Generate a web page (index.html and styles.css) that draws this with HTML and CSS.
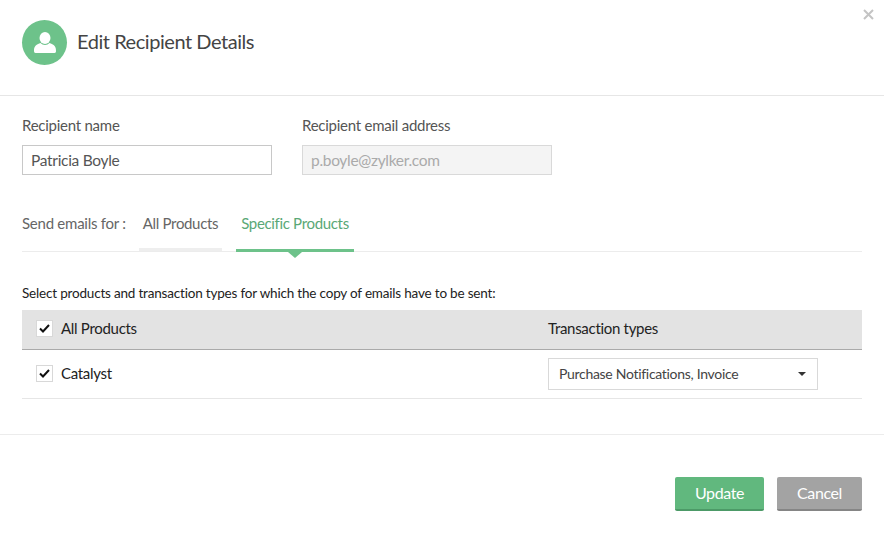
FILE: index.html
```html
<!DOCTYPE html>
<html lang="en">
<head>
    <meta charset="UTF-8">
    <title>Edit Recipient Details</title>
    <link rel="stylesheet" href="styles.css">
</head>
<body>
    <div class="dialog">
        <header class="dialog-header">
            <div class="avatar">
                <svg width="22" height="21" viewBox="0 0 22 21">
                    <ellipse cx="11" cy="6" rx="5.500" ry="6" fill="#fff"/>
                    <path d="M0 19c0-4 1-6 6.500-8 1.200 1.300 2.700 2 4.500 2s3.300-.7 4.500-2c5.500 2 6.500 4 6.500 8 0 1-.5 2-1.500 2h-19C.5 21 0 20 0 19z" fill="#fff"/>
                </svg>
            </div>
            <h1>Edit Recipient Details</h1>
            <button class="close" aria-label="Close">
                <svg width="11" height="11" viewBox="0 0 11 11"><path d="M1 1l9 9M10 1l-9 9" stroke="#c4c4c4" stroke-width="2" fill="none"/></svg>
            </button>
        </header>

        <div class="dialog-body">
            <div class="fields">
                <div class="field">
                    <label for="name">Recipient name</label>
                    <input id="name" type="text" value="Patricia Boyle">
                </div>
                <div class="field">
                    <label for="email">Recipient email address</label>
                    <input id="email" type="text" value="p.boyle@zylker.com" disabled>
                </div>
            </div>

            <div class="tabs">
                <span class="tabs-label">Send emails for :</span>
                <a class="tab">All Products</a>
                <a class="tab active">Specific Products</a>
            </div>

            <p class="hint">Select products and transaction types for which the copy of emails have to be sent:</p>

            <div class="table-head">
                <div class="cell-product">
                    <span class="check"><svg width="11" height="9" viewBox="0 0 11 9"><path d="M1 4.500l3 3 6-6.500" stroke="#111" stroke-width="2" fill="none"/></svg></span>
                    <span>All Products</span>
                </div>
                <div class="cell-type"><span>Transaction types</span></div>
            </div>
            <div class="table-row">
                <div class="cell-product">
                    <span class="check"><svg width="11" height="9" viewBox="0 0 11 9"><path d="M1 4.500l3 3 6-6.500" stroke="#111" stroke-width="2" fill="none"/></svg></span>
                    <span>Catalyst</span>
                </div>
                <div class="cell-type">
                    <div class="select">
                        <span class="select-value">Purchase Notifications, Invoice</span>
                        <i class="caret"></i>
                    </div>
                </div>
            </div>
        </div>

        <footer class="dialog-footer">
            <button class="btn btn-update">Update</button>
            <button class="btn btn-cancel">Cancel</button>
        </footer>
    </div>
</body>
</html>
```

FILE: styles.css
```css
* {
    box-sizing: border-box;
}
body {
    margin: 0;
    font-family: 'Lato', 'Open Sans', sans-serif;
    letter-spacing: -0.3px;
    background: #fff;
    color: #333;
}
.dialog {
    width: 884px;
    height: 533px;
    overflow: hidden;
}
.dialog-header {
    position: relative;
    display: flex;
    align-items: center;
    height: 96px;
    padding: 0 22px 11px;
    border-bottom: 1px solid #e6e6e6;
}
.dialog-header h1 {
    margin: 0 0 2px 10px;
    font-size: 20px;
    font-weight: 400;
    letter-spacing: -0.45px;
    color: #444;
}
.avatar {
    display: flex;
    align-items: center;
    justify-content: center;
    width: 45px;
    height: 45px;
    border-radius: 50%;
    background: #6dc28a;
}
.close {
    position: absolute;
    top: 8px;
    right: 10px;
    padding: 0;
    border: none;
    background: none;
}
.dialog-body {
    padding: 19px 22px 0;
    height: 339px;
    border-bottom: 1px solid #ececec;
}
.fields {
    display: flex;
    gap: 30px;
}
.field {
    width: 250px;
}
.field label {
    display: block;
    margin-bottom: 10px;
    height: 20px;
    line-height: 20px;
    font-size: 15px;
    letter-spacing: -0.25px;
    color: #555;
}
.field input {
    display: block;
    width: 100%;
    height: 30px;
    padding: 0 8px;
    border: 1px solid #c8c8c8;
    font-family: inherit;
    font-size: 15.500px;
    letter-spacing: -0.3px;
    color: #555;
    outline: none;
}
.field input:disabled {
    background: #f4f4f4;
    border-color: #d9d9d9;
    color: #aaa;
}
.tabs {
    display: flex;
    align-items: flex-start;
    height: 48px;
    margin-top: 29px;
    border-bottom: 1px solid #ececec;
}
.tabs-label {
    width: 117px;
    padding-top: 9px;
    line-height: 20px;
    font-size: 15px;
    letter-spacing: -0.25px;
    color: #666;
}
.tab {
    position: relative;
    height: 46px;
    margin-top: 1px;
    padding-top: 8px;
    line-height: 20px;
    font-size: 15px;
    letter-spacing: -0.33px;
    text-align: center;
    color: #666;
    border-bottom: 3px solid #eee;
}
.tab:nth-of-type(1) {
    width: 83px;
}
.tab.active {
    width: 118px;
    margin-left: 14px;
    color: #5aa876;
    height: 47px;
    border-bottom-color: #6dc28a;
}
.tab.active::after {
    content: "";
    position: absolute;
    left: 52px;
    bottom: -9px;
    border-left: 7px solid transparent;
    border-right: 7px solid transparent;
    border-top: 6px solid #6dc28a;
}
.hint {
    margin: 31px 0 7px;
    height: 20px;
    line-height: 20px;
    font-size: 13.500px;
    letter-spacing: -0.19px;
    color: #222;
}
.table-head, .table-row {
    display: flex;
    align-items: center;
    font-size: 15px;
    color: #222;
}
.table-head {
    height: 40px;
    padding-bottom: 3px;
    background: #e3e3e3;
    border-bottom: 1px solid #aaa;
}
.table-row {
    height: 49px;
    border-bottom: 1px solid #e6e6e6;
}
.cell-product {
    display: flex;
    align-items: center;
    width: 526px;
    padding-left: 14px;
}
.table-row .cell-product {
    padding-bottom: 2px;
}
.check {
    display: flex;
    align-items: center;
    justify-content: center;
    width: 17px;
    height: 17px;
    margin-right: 8px;
    background: #fff;
    border: 1px solid #d8d8d8;
}
.select {
    display: flex;
    align-items: center;
    justify-content: space-between;
    width: 270px;
    height: 32px;
    padding: 0 11px 0 10px;
    border: 1px solid #d9d9d9;
    font-size: 14px;
    color: #444;
}
.select-value {
    margin-bottom: 2px;
}
.caret {
    border-left: 4px solid transparent;
    border-right: 4px solid transparent;
    border-top: 4px solid #333;
}
.dialog-footer {
    display: flex;
    justify-content: flex-end;
    gap: 13px;
    padding: 42px 22px 0;
}
.btn {
    height: 34px;
    padding: 0 0 2px;
    border: none;
    border-radius: 2px;
    font-family: inherit;
    font-size: 16px;
    letter-spacing: -0.4px;
    color: #fff;
    cursor: pointer;
}
.btn-update {
    width: 89px;
    background: #61b87e;
    border-bottom: 2px solid #4c9a67;
}
.btn-cancel {
    width: 85px;
    background: #a3a3a3;
    border-bottom: 2px solid #858585;
}
```
